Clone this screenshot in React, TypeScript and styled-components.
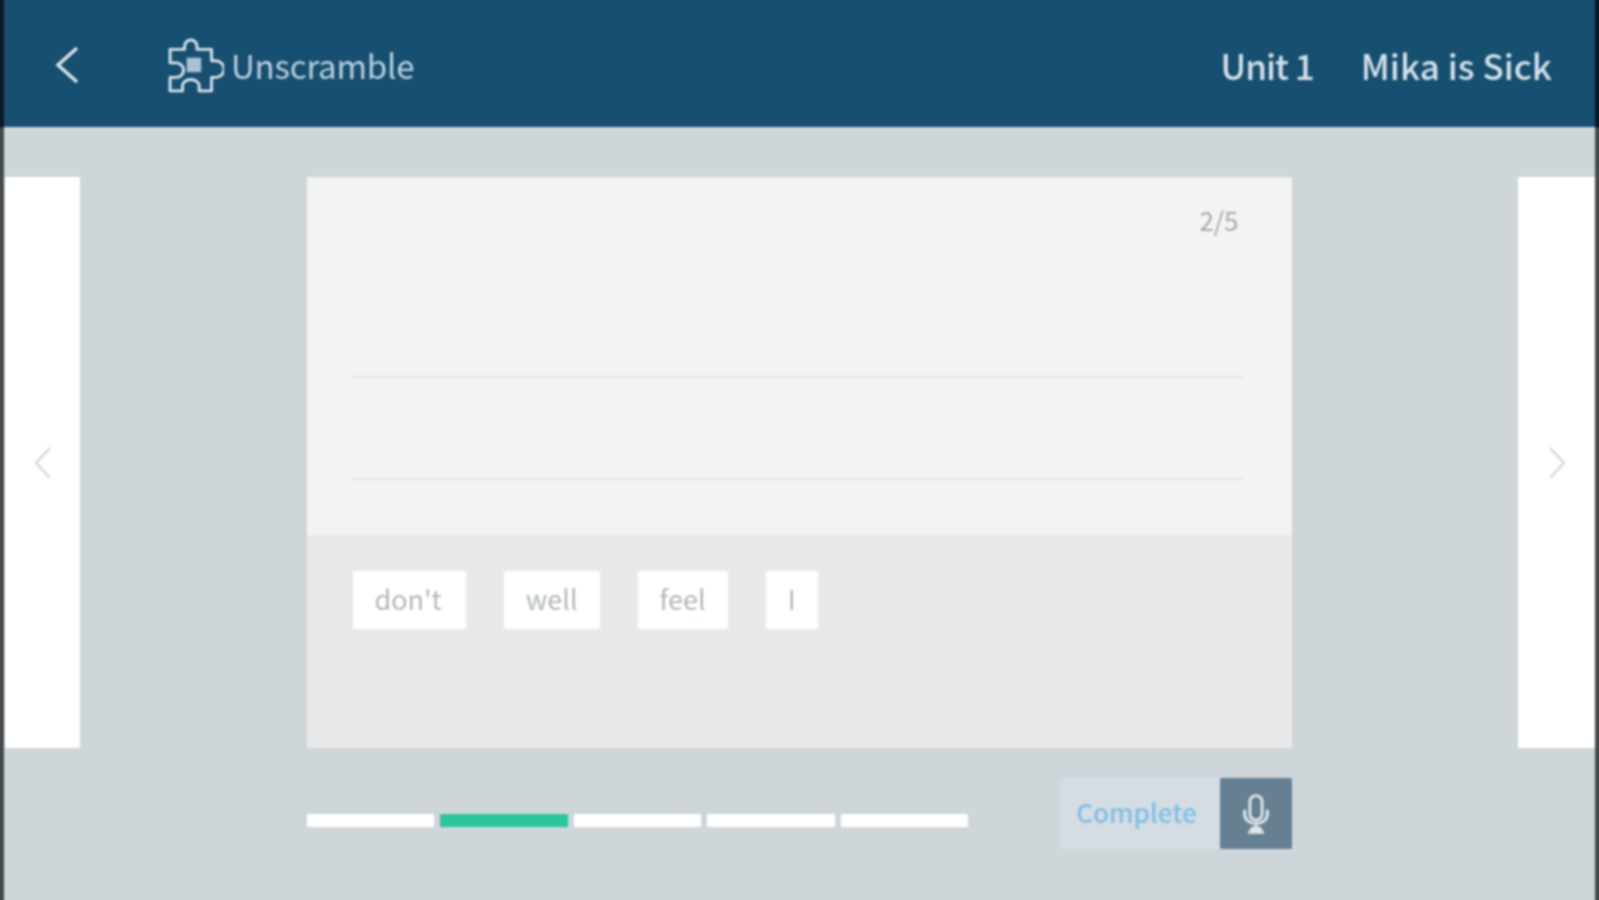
import styled, { createGlobalStyle } from "styled-components";

const GlobalStyle = createGlobalStyle`
  html, body {
    margin: 0;
    padding: 0;
    height: 100%;
    overflow: hidden;
    background-color: #cfd6da;
    font-family: "Noto Sans CJK KR", "Noto Sans", sans-serif;
  }
`;

const WORDS = ["don't", "well", "feel", "I"];
const STEPS = [1, 2, 3, 4, 5];

const App = (): JSX.Element => {
  return (
    <Frame>
      <GlobalStyle />
      <EdgeBar />
      <Screen>
        <Header>
          <BackButton>
            <svg width="26" height="38" viewBox="0 0 26 38" fill="none" stroke="currentColor" strokeWidth="3.4">
              <path d="M23 2 4 19l19 17" />
            </svg>
          </BackButton>
          <TitleIcon>
            <svg width="56" height="56" viewBox="0 0 54 54" fill="none" stroke="currentColor" strokeWidth="2.8" strokeLinejoin="round">
              <path d="M2 11h14V8a6 6 0 0 1 12 0v3h14v11h4a8 8 0 0 1 0 16h-4v13H30v-5a8 6 0 0 0-16 0v5H2V38h6a7 7 0 0 0 0-14H2z" />
              <rect x="18" y="19" width="14" height="14" fill="#a9c2d0" stroke="none" />
            </svg>
          </TitleIcon>
          <Title>Unscramble</Title>
          <UnitInfo>
            <UnitText $tight>Unit 1</UnitText>
            <UnitText>Mika is Sick</UnitText>
          </UnitInfo>
        </Header>
        <Stage>
          <SidePanel $width={75}>
            <svg width="18" height="34" viewBox="0 0 18 34" fill="none" stroke="currentColor" strokeWidth="2.2">
              <path d="M16 2 2 17l14 15" />
            </svg>
          </SidePanel>
          <Center>
            <Card>
              <AnswerArea>
                <Counter>2/5</Counter>
                <AnswerLine />
                <AnswerLine />
              </AnswerArea>
              <WordArea>
                {WORDS.map((word) => (
                  <WordChip key={word}>{word}</WordChip>
                ))}
              </WordArea>
            </Card>
            <Footer>
              <Progress>
                {STEPS.map((step) => (
                  <ProgressStep key={step} $active={step === 2} />
                ))}
              </Progress>
              <Actions>
                <CompleteButton>Complete</CompleteButton>
                <MicButton>
                  <svg width="30" height="42" viewBox="0 0 34 48" fill="none" stroke="#dfe5e8" strokeWidth="3.4">
                    <rect x="10" y="3" width="14" height="28" rx="7" />
                    <path d="M4 19v5c0 7 6 11 13 11s13-4 13-11v-5" />
                    <path d="M17 35v5M10 45l3-5h8l3 5z" fill="#dfe5e8" />
                  </svg>
                </MicButton>
              </Actions>
            </Footer>
          </Center>
          <SidePanel $width={77}>
            <svg width="18" height="34" viewBox="0 0 18 34" fill="none" stroke="currentColor" strokeWidth="2.2">
              <path d="m2 2 14 15L2 32" />
            </svg>
          </SidePanel>
        </Stage>
      </Screen>
      <EdgeBar />
    </Frame>
  );
};

export default App;

/* 4px bigger than the window on each side so the blur has no visible edge */
const Frame = styled.div`
  display: flex;
  width: 1607px;
  height: 908px;
  margin: -4px;
  overflow: hidden;
  filter: blur(1px);
`;

const EdgeBar = styled.div`
  flex: 0 0 8px;
  background: linear-gradient(to bottom, #0a1a22 0, #0a1a22 131px, #45494c 132px, #45494c 100%);
`;

const Screen = styled.div`
  flex: 1;
  display: flex;
  flex-direction: column;
  min-width: 0;
`;

const Header = styled.header`
  flex: 0 0 131px;
  display: flex;
  align-items: center;
  padding: 6px 43px 0 50px;
  box-sizing: border-box;
  background-color: #164f70;
`;

const BackButton = styled.div`
  display: flex;
  margin-right: 88px;
  color: #dce6eb;
`;

const TitleIcon = styled.div`
  display: flex;
  margin: 3px 7px 0 0;
  color: #d7e3ea;
`;

const Title = styled.h1`
  margin: 0;
  font-size: 33px;
  font-weight: 400;
  letter-spacing: -0.2px;
  color: #bcd2df;
`;

const UnitInfo = styled.div`
  display: flex;
  gap: 47px;
  margin-left: auto;
`;

const UnitText = styled.span<{ $tight?: boolean }>`
  font-size: 35px;
  font-weight: 500;
  letter-spacing: ${({ $tight }) => ($tight ? "-1px" : "0")};
  color: #d5e1e7;
`;

const Stage = styled.main`
  flex: 1;
  display: flex;
  justify-content: space-between;
  align-items: flex-start;
  padding: 50px 0 0 1px;
`;

const SidePanel = styled.div<{ $width: number }>`
  display: flex;
  align-items: center;
  justify-content: center;
  width: ${({ $width }) => $width}px;
  height: 571px;
  background-color: #ffffff;
  color: #d0d5d8;
`;

const Center = styled.div`
  width: 985px;
  display: flex;
  flex-direction: column;
`;

const Card = styled.section`
  display: flex;
  flex-direction: column;
  height: 571px;
`;

const AnswerArea = styled.div`
  position: relative;
  flex: 0 0 358px;
  display: flex;
  flex-direction: column;
  gap: 100px;
  box-sizing: border-box;
  padding: 199px 50px 0 45px;
  background-color: #f3f3f3;
`;

const Counter = styled.span`
  position: absolute;
  top: 24px;
  right: 53px;
  font-size: 26px;
  color: #a4aaad;
`;

const AnswerLine = styled.div`
  height: 0;
  border-top: 2px dotted #cfd3d5;
`;

const WordArea = styled.div`
  flex: 1;
  display: flex;
  align-items: flex-start;
  gap: 38px;
  padding: 36px 46px;
  background-color: #e8e8e8;
`;

const WordChip = styled.div`
  display: flex;
  align-items: center;
  justify-content: center;
  box-sizing: border-box;
  height: 58px;
  padding: 0 22px 4px;
  background-color: #ffffff;
  font-size: 27px;
  color: #b0b7bb;

  &:first-child {
    padding-right: 24px;
  }
`;

const Footer = styled.div`
  display: flex;
  align-items: center;
  justify-content: space-between;
  margin-top: 30px;
`;

const Progress = styled.div`
  display: flex;
  gap: 6px;
  margin-top: 14px;
`;

const ProgressStep = styled.div<{ $active: boolean }>`
  width: 127.6px;
  height: 13px;
  border-radius: 1px;
  background-color: ${({ $active }) => ($active ? "#2ac79c" : "#ffffff")};
`;

const Actions = styled.div`
  display: flex;
`;

const CompleteButton = styled.div`
  display: flex;
  align-items: center;
  justify-content: center;
  width: 160px;
  height: 71px;
  padding: 0 6px 4px 0;
  box-sizing: border-box;
  background-color: #d5dce2;
  font-size: 26px;
  font-weight: 500;
  color: #7cc0ea;
`;

const MicButton = styled.div`
  display: flex;
  align-items: center;
  justify-content: center;
  width: 72px;
  height: 71px;
  border-radius: 2px;
  background-color: #658092;
`;
